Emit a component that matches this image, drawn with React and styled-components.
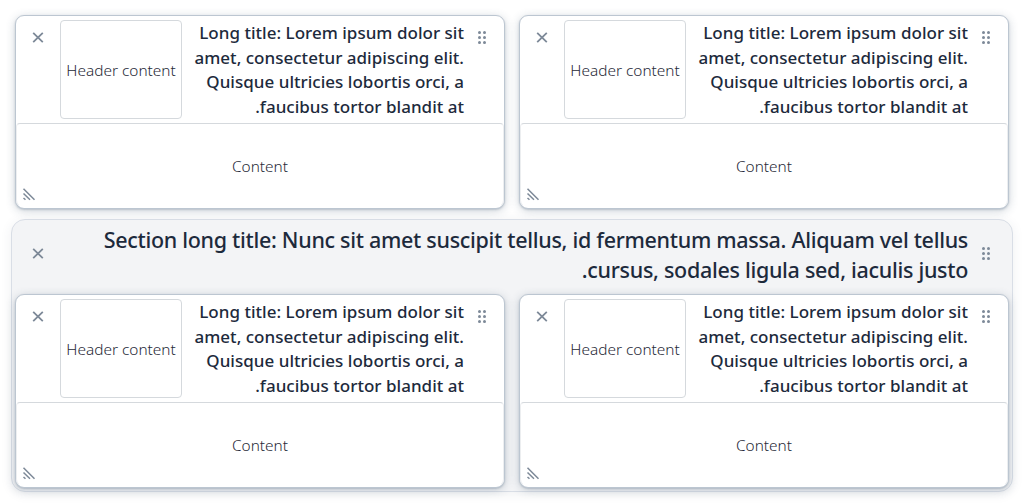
import React from 'react';
import styled, { createGlobalStyle } from 'styled-components';

const GlobalStyle = createGlobalStyle`
  *, *::before, *::after { box-sizing: border-box; }
  body {
    margin: 0;
    background: #fff;
    color: #1d2a3c;
    font-family: "Noto Sans", "Open Sans", sans-serif;
  }
`;

const Page = styled.main`
  width: 1024px;
  height: 503px;
  padding: 15px 11px 11px;
  overflow: hidden;
`;

const CardRow = styled.div`
  display: grid;
  grid-template-columns: 490px 490px;
  gap: 14px;
  padding: 0 ${(p) => (p.$inset ? '3px' : '4px')};
`;

const Card = styled.article`
  display: flex;
  flex-direction: column;
  height: 194px;
  border: 1px solid #bcc6d1;
  border-radius: 9px;
  background: #fff;
  box-shadow: 0 1px 2px rgba(51, 75, 102, 0.22), 0 2px 10px rgba(51, 75, 102, 0.24);
`;

const CardHeader = styled.header`
  display: flex;
  height: 107px;
  padding: 4px 14px 0;
`;

const Title = styled.h2`
  flex: none;
  width: 280px;
  margin: 1px 10px 0 0;
  font-size: 17px;
  font-weight: 500;
  line-height: 24.7px;
  letter-spacing: 0.02px;
`;

const HeaderBox = styled.div`
  display: flex;
  flex: none;
  align-items: center;
  justify-content: center;
  width: 122px;
  height: 99px;
  margin-left: 14px;
  padding-top: 1px;
  border: 1px solid #d5d9dd;
  border-radius: 4px;
  color: #1f2937;
  font-size: 15.4px;
  font-weight: 300;
  white-space: nowrap;
`;

const ContentBox = styled.div`
  position: relative;
  display: flex;
  flex: 1;
  align-items: center;
  justify-content: center;
  padding-top: 1px;
  border: 1px solid #d5d9dd;
  border-bottom-color: transparent;
  border-left-color: #eceef0;
  border-right-color: #eceef0;
  border-radius: 4px 4px 8px 8px;
  color: #1f2937;
  font-size: 15.4px;
  font-weight: 300;
`;

const IconButton = styled.button`
  display: flex;
  flex: none;
  align-items: center;
  justify-content: center;
  width: 16px;
  height: 16px;
  margin: ${(p) => p.$top || 0}px 0 0;
  padding: 0;
  border: 0;
  background: none;
  color: #7d8998;
`;

const ResizeHandle = styled(IconButton)`
  position: absolute;
  left: 4px;
  bottom: 5px;
`;

const Section = styled.section`
  width: 1002px;
  height: 273px;
  margin-top: 10px;
  border: 1px solid #d9dee6;
  border-radius: 14px;
  background: #f3f4f6;
  box-shadow: 0 2px 12px rgba(51, 65, 92, 0.08);
`;

const SectionHeader = styled.header`
  display: flex;
  height: 74px;
  padding: 5px 18px 0;
`;

const SectionTitle = styled.h1`
  flex: none;
  width: 884px;
  margin: 0 10px 0 0;
  font-size: 21.5px;
  font-weight: 500;
  line-height: 30px;
  letter-spacing: -0.3px;
`;

const Spacer = styled.span`
  flex: 1;
`;

const DragIcon = () => (
  <svg width="16" height="16" viewBox="0 0 16 16" fill="currentColor" aria-hidden="true">
    {[3.5, 8.5, 13.5].map((y) => (
      <React.Fragment key={y}>
        <circle cx="5.5" cy={y} r="1.5" />
        <circle cx="10.5" cy={y} r="1.5" />
      </React.Fragment>
    ))}
  </svg>
);

const CloseIcon = () => (
  <svg width="16" height="16" viewBox="0 0 16 16" stroke="currentColor" strokeWidth="1.8" aria-hidden="true">
    <path d="M3.2 3.8 12.8 13.2M12.8 3.8 3.2 13.2" />
  </svg>
);

const ResizeIcon = () => (
  <svg width="16" height="16" viewBox="0 0 16 16" stroke="currentColor" strokeWidth="1.5" aria-hidden="true">
    <path d="M2.5 2.8 13.5 13.8M2.5 7.5 9 13.8M2.5 12 4.5 13.8" />
  </svg>
);

const Item = () => (
  <Card>
    <CardHeader>
      <IconButton $top={9} aria-label="Drag"><DragIcon /></IconButton>
      <Title>Long title: Lorem ipsum dolor sit amet, consectetur adipiscing elit. Quisque ultricies lobortis orci, a faucibus tortor blandit at.</Title>
      <Spacer />
      <HeaderBox>Header content</HeaderBox>
      <IconButton $top={9} aria-label="Remove"><CloseIcon /></IconButton>
    </CardHeader>
    <ContentBox>
      Content
      <ResizeHandle aria-label="Resize"><ResizeIcon /></ResizeHandle>
    </ContentBox>
  </Card>
);

export default function App() {
  return (
    <Page dir="rtl">
      <GlobalStyle />
      <CardRow>
        <Item />
        <Item />
      </CardRow>
      <Section>
        <SectionHeader>
          <IconButton $top={20} aria-label="Drag"><DragIcon /></IconButton>
          <SectionTitle>Section long title: Nunc sit amet suscipit tellus, id fermentum massa. Aliquam vel tellus cursus, sodales ligula sed, iaculis justo.</SectionTitle>
          <Spacer />
          <IconButton $top={20} aria-label="Remove"><CloseIcon /></IconButton>
        </SectionHeader>
        <CardRow $inset>
          <Item />
          <Item />
        </CardRow>
      </Section>
    </Page>
  );
}
